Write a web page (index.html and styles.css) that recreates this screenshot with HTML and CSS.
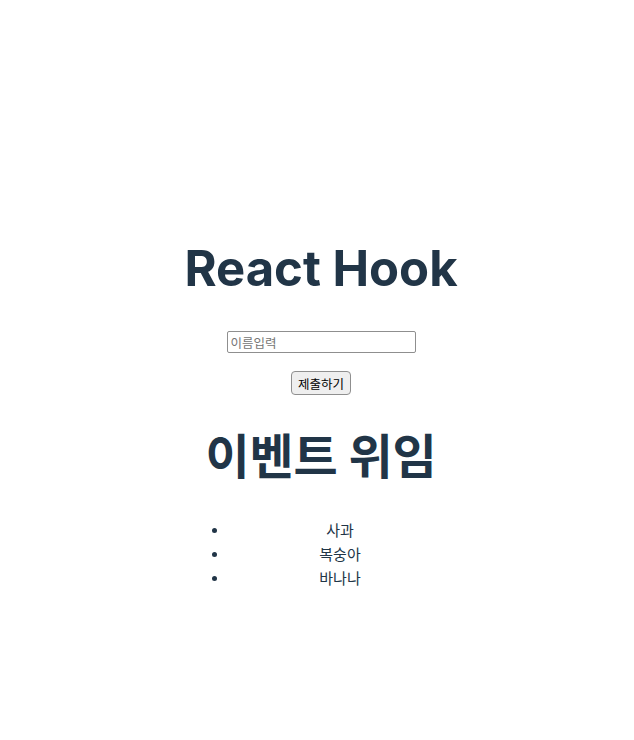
FILE: index.html
```html
<!DOCTYPE html>
<html lang="ko">
<head>
<meta charset="utf-8">
<title>React Hook</title>
<link rel="stylesheet" href="styles.css">
</head>
<body>
<div class="root">
  <h1 class="title title-en">React Hook</h1>
  <form class="form">
    <div class="field field-input"><input class="name-input" type="text" placeholder="이름입력"></div>
    <div class="field"><button class="submit" type="button">제출하기</button></div>
  </form>
  <h1 class="title title-ko">이벤트 위임</h1>
  <ul class="fruits">
    <li>사과</li>
    <li>복숭아</li>
    <li>바나나</li>
  </ul>
</div>
</body>
</html>
```
FILE: styles.css
```css
html, body {
  margin: 0;
  padding: 0;
}
body {
  font-family: Inter, "Noto Sans CJK KR", system-ui, sans-serif;
  line-height: 1.5;
  font-weight: 400;
  color: #213547;
  background: #ffffff;
  display: flex;
  place-items: center;
  min-width: 320px;
  min-height: 100vh;
}
.root {
  max-width: 1280px;
  margin: 0 auto;
  padding: 106px 2rem 2rem 40px;
  text-align: center;
}
.title {
  line-height: 56px;
  margin: 34px 0;
  font-weight: 700;
}
.title-en {
  font-size: 49px;
}
.title-ko {
  font-size: 48px;
  letter-spacing: -0.2px;
}
.form {
  margin: 0;
}
.field {
  margin: 0 0 16px;
  line-height: 0;
}
.field-input {
  margin-bottom: 18px;
}
.name-input {
  box-sizing: border-box;
  width: 189px;
  height: 22px;
  padding: 1px 3px;
  border: 1px solid #8f8f8f;
  border-radius: 2px;
  font-family: "Noto Sans CJK KR", sans-serif;
  font-size: 12.5px;
  color: #000;
  background: #fff;
}
.name-input::placeholder {
  color: #757575;
}
.submit {
  box-sizing: border-box;
  height: 24px;
  padding: 1px 6px;
  border: 1px solid #8f8f8f;
  border-radius: 4px;
  background: #efefef;
  color: #000;
  font-family: "Noto Sans CJK KR", sans-serif;
  font-size: 12.5px;
  line-height: 1.2;
}
.fruits {
  margin: 17px 0 16px;
  padding-left: 45px;
}
.fruits li {
  font-size: 15px;
  line-height: 24px;
  padding-right: 7px;
}
```
